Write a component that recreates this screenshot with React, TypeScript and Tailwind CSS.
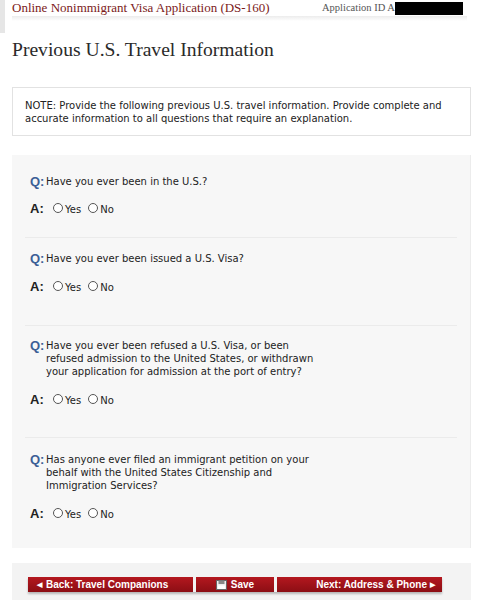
import React from "react";

const verdana = { fontFamily: '"DejaVu Sans", Verdana, sans-serif' };
const arial = { fontFamily: '"Liberation Sans", Arial, sans-serif' };

function Radio({ label }: { label: string }) {
  return (
    <span className="flex items-end gap-[2px] mr-[7px]">
      <span className="inline-block w-[10px] h-[10px] rounded-full border border-[#555] bg-white mb-[3px]" />
      <span className="text-[10px] text-[#222] leading-[12px]">{label}</span>
    </span>
  );
}

function Question({ lines, gapA, after }: { lines: string[]; gapA: string; after: string }) {
  return (
    <div className={`flex flex-col ${after}`}>
      <div className="flex items-start">
        <span className="w-[16px] text-[13px] font-bold text-[#3c5f96] leading-[13px] whitespace-nowrap" style={arial}>Q:</span>
        <div className="flex flex-col text-[10px] leading-[13px] text-[#222] whitespace-nowrap">
          {lines.map((l, i) => (
            <span key={i}>{l}</span>
          ))}
        </div>
      </div>
      <div className={`flex items-end ${gapA}`}>
        <span className="w-[23px] text-[13px] font-bold text-[#222] leading-[15px]" style={arial}>A:</span>
        <Radio label="Yes" />
        <Radio label="No" />
      </div>
    </div>
  );
}

export default function App() {
  return (
    <div className="w-[482px] h-[600px] bg-white overflow-hidden" style={verdana}>
      <div className="flex items-start">
        <div className="w-[5px] h-[33px] bg-[#e6e6e6] shrink-0" />
        <div className="flex flex-col pl-[7px] w-[462px]">
          <div className="flex items-center h-[16px] whitespace-nowrap" style={{ fontFamily: '"Liberation Serif", serif' }}>
            <span className="w-[310px] text-[13px] text-[#7b1a1a] leading-[16px]">Online Nonimmigrant Visa Application (DS-160)</span>
            <span className="text-[10.5px] text-[#555] leading-[16px]">Application ID</span>
            <span className="ml-[2px] text-[10.5px] text-[#555] leading-[16px]">A</span>
            <span className="w-[68px] h-[13px] bg-black" />
          </div>
          <div className="h-[5px] w-[455px] bg-gradient-to-b from-[#ececec] to-white" />
        </div>
      </div>

      <div className="px-[12px] pt-[5px]" style={{ fontFamily: '"Liberation Serif", serif' }}>
        <h1 className="text-[19.6px] leading-[24px] text-[#2a2a2a] whitespace-nowrap">Previous U.S. Travel Information</h1>
      </div>

      <div className="mx-[12px] mt-[25px] w-[459px] border border-[#e2e2e2] bg-white px-[12px] pt-[11px] pb-[10px]">
        <p className="text-[10px] leading-[13px] text-[#222]">
          NOTE: Provide the following previous U.S. travel information. Provide complete and
          <br />
          accurate information to all questions that require an explanation.
        </p>
      </div>

      <div className="mx-[12px] mt-[19px] w-[459px] h-[393px] bg-[#f7f7f7] border-r border-[#ececec] px-[13px] pt-[20px]">
        <div className="flex flex-col px-[5px]">
          <Question lines={["Have you ever been in the U.S.?"]} gapA="mt-[13px]" after="pb-[21px]" />
        </div>
        <div className="h-px bg-[#ebebeb]" />
        <div className="flex flex-col px-[5px] pt-[14px]">
          <Question lines={["Have you ever been issued a U.S. Visa?"]} gapA="mt-[14px]" after="pb-[31px]" />
        </div>
        <div className="h-px bg-[#ebebeb]" />
        <div className="flex flex-col px-[5px] pt-[13px]">
          <Question
            lines={[
              "Have you ever been refused a U.S. Visa, or been",
              "refused admission to the United States, or withdrawn",
              "your application for admission at the port of entry?",
            ]}
            gapA="mt-[14px]"
            after="pb-[30px]"
          />
        </div>
        <div className="h-px bg-[#ebebeb]" />
        <div className="flex flex-col px-[5px] pt-[15px]">
          <Question
            lines={[
              "Has anyone ever filed an immigrant petition on your",
              "behalf with the United States Citizenship and",
              "Immigration Services?",
            ]}
            gapA="mt-[14px]"
            after=""
          />
        </div>
      </div>

      <div className="mx-[12px] mt-[15px] w-[459px] h-[40px] bg-[#f3f3f3] pt-[14px] pl-[16px]">
        <div className="flex gap-[3px] shadow-[0_2px_2px_rgba(0,0,0,0.25)] w-fit" style={arial}>
          <button className="w-[165px] h-[15px] bg-gradient-to-b from-[#b4181f] to-[#8c0e14] text-white text-[10px] font-bold leading-[15px] flex items-center pl-[9px] whitespace-nowrap">
            <span className="text-[7px] mr-[4px]">◀</span>Back: Travel Companions
          </button>
          <button className="w-[78px] h-[15px] bg-gradient-to-b from-[#b4181f] to-[#8c0e14] text-white text-[10px] font-bold leading-[15px] flex items-center justify-center">
            <svg width="11" height="10" viewBox="0 0 11 10" className="mr-[4px]">
              <rect x="0.5" y="0.5" width="10" height="9" fill="#eee" stroke="#666" />
              <rect x="2.5" y="0.5" width="6" height="3.5" fill="#888" />
              <rect x="2" y="5.5" width="7" height="3.5" fill="#fff" />
            </svg>
            Save
          </button>
          <button className="w-[165px] h-[15px] bg-gradient-to-b from-[#b4181f] to-[#8c0e14] text-white text-[10px] font-bold leading-[15px] flex items-center justify-end pr-[7px] whitespace-nowrap">
            Next: Address &amp; Phone<span className="text-[7px] ml-[3px]">▶</span>
          </button>
        </div>
      </div>
    </div>
  );
}
